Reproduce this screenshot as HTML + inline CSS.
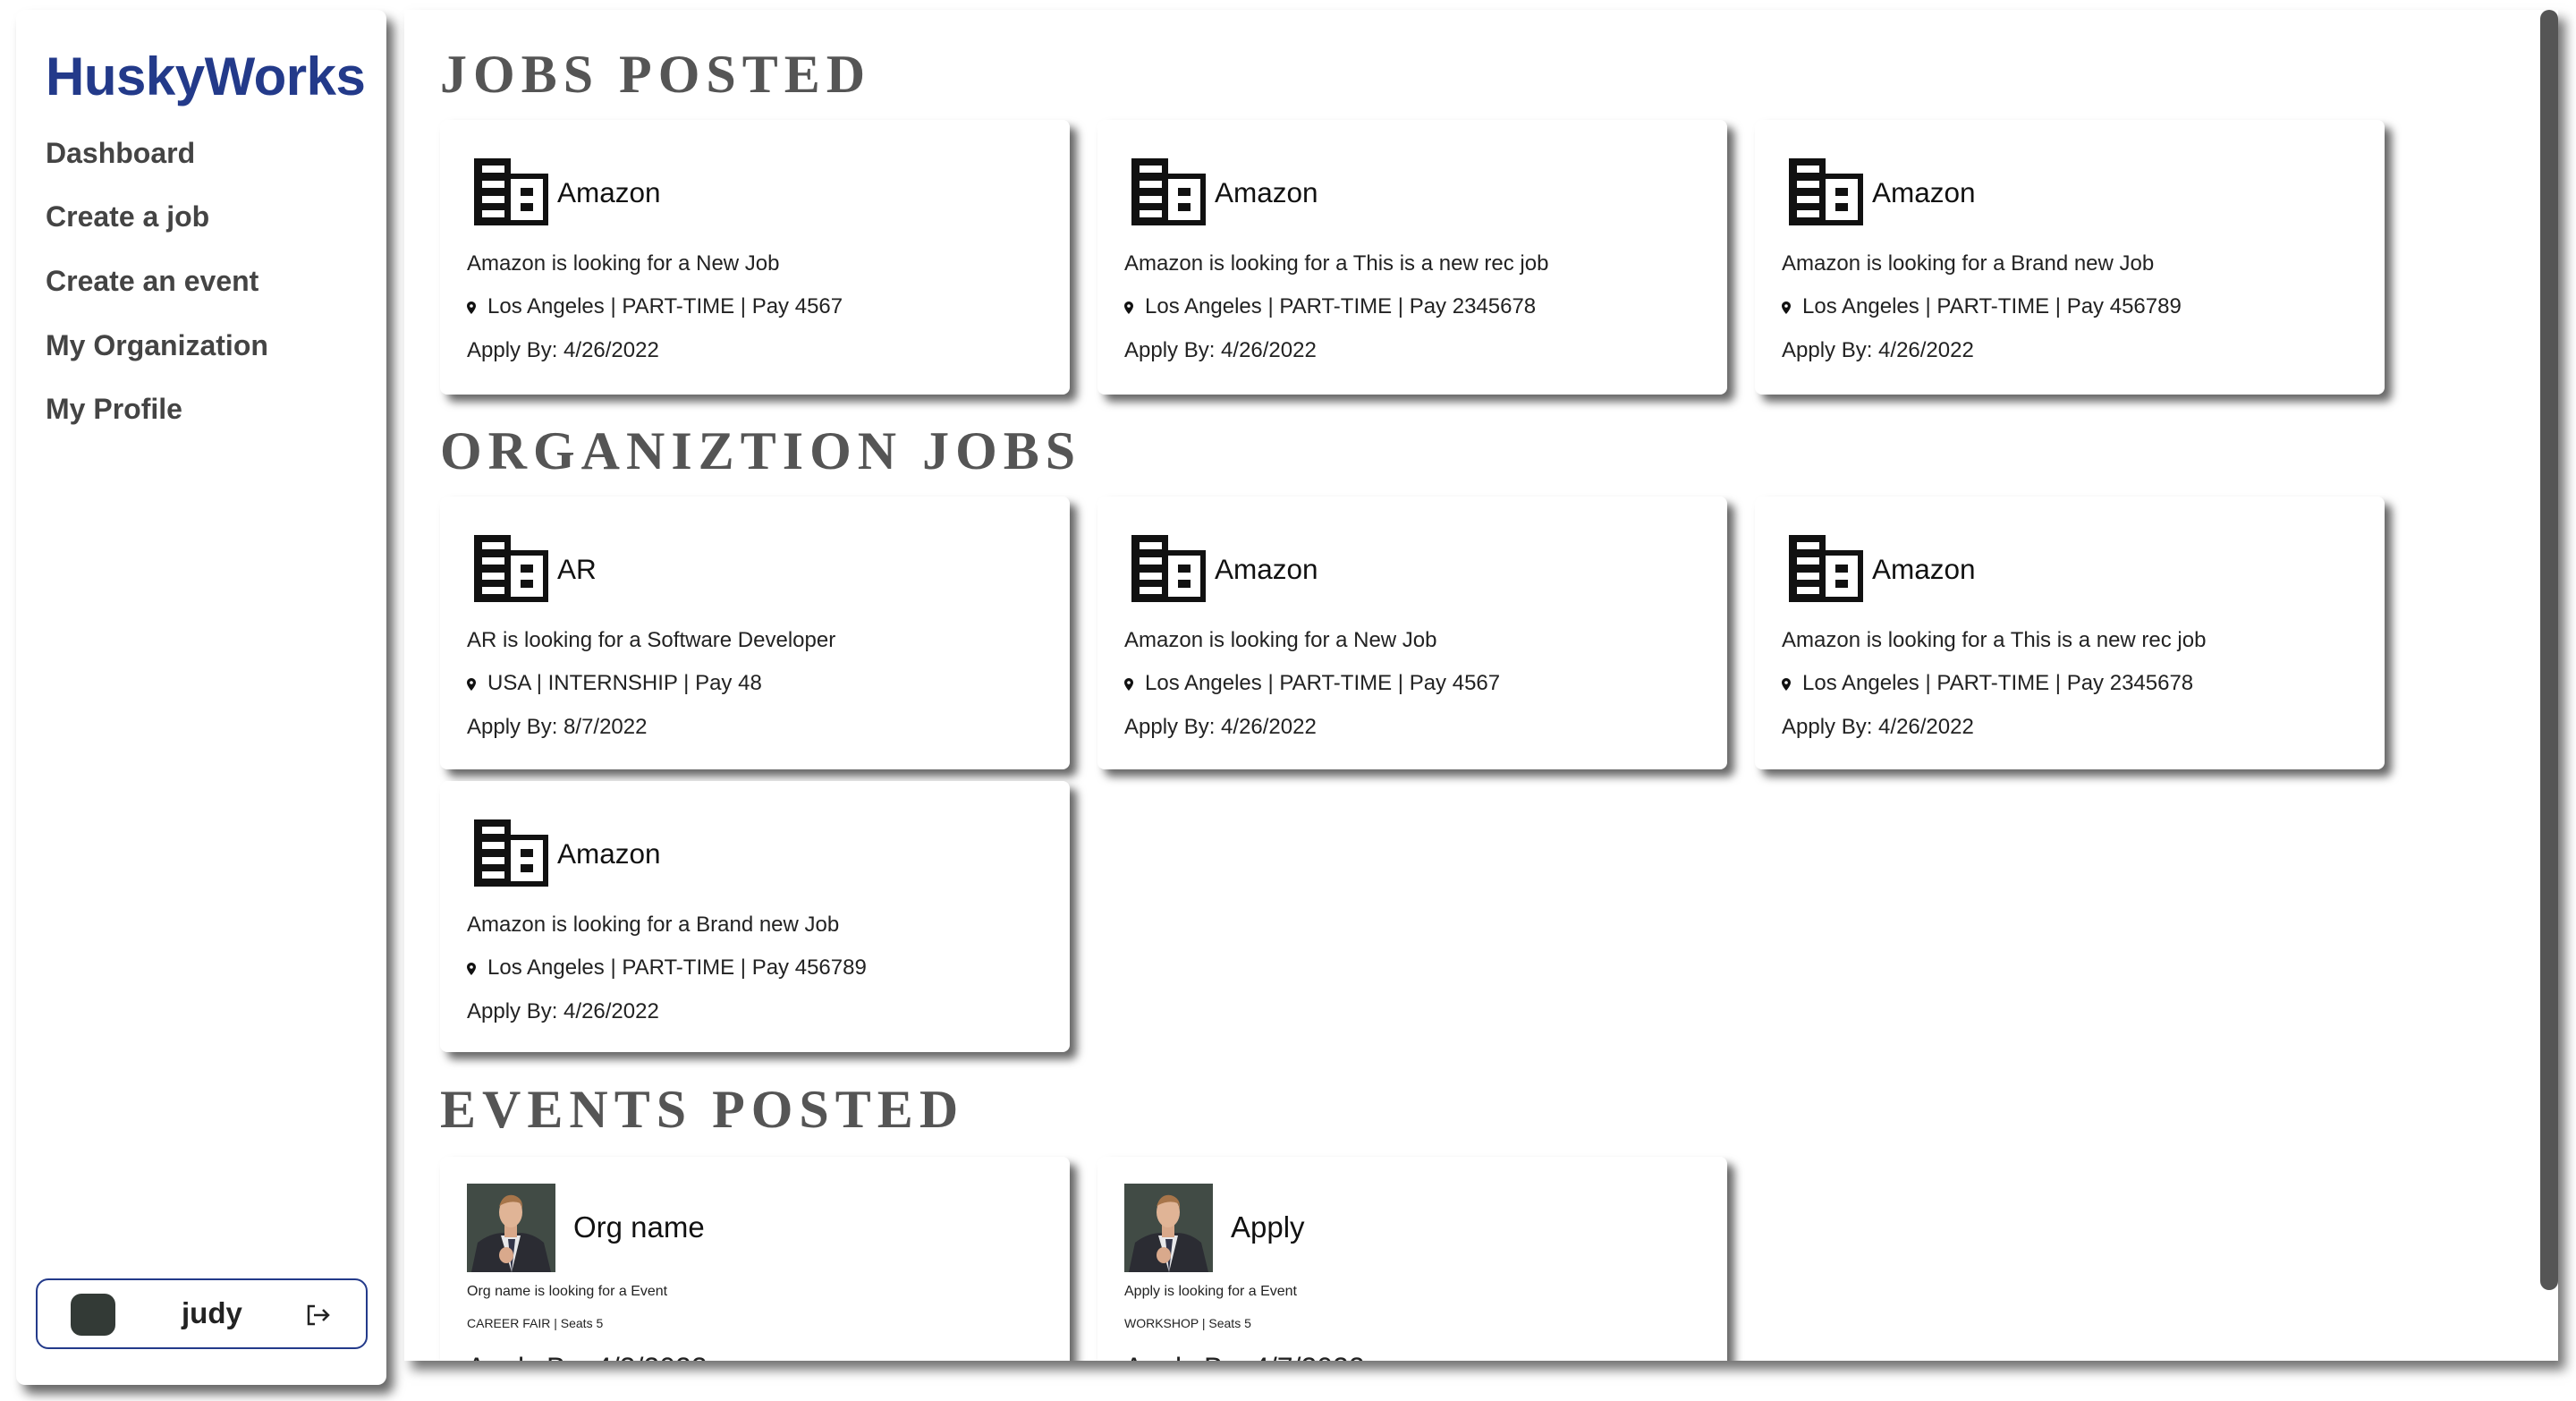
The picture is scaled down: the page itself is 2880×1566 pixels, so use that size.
<!DOCTYPE html>
<html><head><meta charset="utf-8"><style>
*{margin:0;padding:0;box-sizing:border-box}
html,body{width:2880px;height:1566px;overflow:hidden;background:#fff;font-family:"Liberation Sans",Arial,sans-serif;position:relative}
.side{position:absolute;left:18px;top:11px;width:414px;height:1537px;background:#fff;border-radius:10px;box-shadow:8px 10px 12px rgba(0,0,0,.6)}
.logo{position:absolute;left:33px;top:40px;font-size:60px;font-weight:bold;color:#233a8a;letter-spacing:-0.5px}
.nav{position:absolute;left:33px;font-size:32px;font-weight:bold;color:#444}
.user{position:absolute;left:22px;top:1418px;width:371px;height:79px;border:2px solid #233a8a;border-radius:14px}
.av{position:absolute;left:37px;top:15px;width:50px;height:47px;border-radius:12px;background:#333a36}
.uname{position:absolute;left:161px;top:18px;font-size:33px;font-weight:bold;color:#222}
.main{position:absolute;left:452px;top:11px;width:2408px;height:1510px;background:#fff;overflow:hidden;box-shadow:8px 10px 12px rgba(0,0,0,.55)}
.sb{position:absolute;right:0;top:0;width:20px;height:1431px;border-radius:10px;background:#555}
h2{position:absolute;left:40px;font-family:"Liberation Serif",serif;font-weight:bold;font-size:60px;line-height:60px;letter-spacing:7px;color:#555}
.card{position:absolute;width:704px;background:#fff;border-radius:8px;box-shadow:8px 8px 10px rgba(0,0,0,.6)}
.card svg.b{position:absolute;left:38px;top:43px}
.t{position:absolute;left:131px;top:63px;font-size:31.5px;color:#111}
.l{position:absolute;left:30px;font-size:24px;color:#222;white-space:nowrap}
.pin{display:inline-block;width:10px;height:14px;margin-right:13px;vertical-align:-1px}
.ph{position:absolute;left:30px;top:30px;width:99px;height:99px}
</style></head><body>
<div class="side">
<div class="logo">HuskyWorks</div>
<div class="nav" style="top:142px">Dashboard</div>
<div class="nav" style="top:213px">Create a job</div>
<div class="nav" style="top:285px">Create an event</div>
<div class="nav" style="top:357px">My Organization</div>
<div class="nav" style="top:428px">My Profile</div>
<div class="user"><div class="av"></div><div class="uname">judy</div>
<svg style="position:absolute;left:300px;top:26px" width="28" height="26" viewBox="0 0 28 26"><path d="M10 3H3v20h7" fill="none" stroke="#222" stroke-width="2.5"/><path d="M9 13h16M19 7l6 6-6 6" fill="none" stroke="#222" stroke-width="2.5"/></svg></div>
</div>
<svg width="0" height="0" style="position:absolute"><defs>
<symbol id="bld" viewBox="0 0 83 75"><rect x="0" y="0" width="41" height="75" fill="#111"/><rect x="9" y="8" width="25" height="8" fill="#fff"/><rect x="9" y="25" width="25" height="8" fill="#fff"/><rect x="9" y="42" width="25" height="8" fill="#fff"/><rect x="9" y="58" width="25" height="8" fill="#fff"/><rect x="41" y="17" width="42" height="58" fill="#111"/><rect x="41" y="23" width="36" height="46" fill="#fff"/><rect x="52" y="33" width="14" height="9" fill="#111"/><rect x="52" y="50" width="14" height="9" fill="#111"/></symbol>
<symbol id="pin" viewBox="0 0 10 14"><path d="M5 0C2.2 0 0 2.2 0 5c0 3.5 5 9 5 9s5-5.5 5-9C10 2.2 7.8 0 5 0zm0 6.8A1.8 1.8 0 1 1 5 3.2a1.8 1.8 0 0 1 0 3.6z" fill="#111"/></symbol>
<symbol id="man" viewBox="0 0 99 99"><rect width="99" height="99" fill="#414b45"/><path d="M5 99 L12 66 Q30 52 50 56 Q70 52 86 66 L94 99Z" fill="#2b2c33"/><path d="M38 58 L50 99 L60 58Z" fill="#e8e8ea"/><path d="M46 62 L50 99 L54 62Z" fill="#33364a"/><rect x="42" y="44" width="14" height="16" fill="#d8a88a"/><ellipse cx="49" cy="32" rx="13" ry="17" fill="#e0b496"/><path d="M36 26 Q40 11 52 13 Q63 16 62 28 L60 22 Q50 18 38 24Z" fill="#a7754a"/><ellipse cx="44" cy="80" rx="8" ry="9" fill="#d9a98c"/></symbol>
</defs></svg>
<div class="main">
<h2 style="top:42px">JOBS POSTED</h2>
<h2 style="top:463px">ORGANIZTION JOBS</h2>
<h2 style="top:1199px">EVENTS POSTED</h2>

<div class="card" style="left:40px;top:123px;height:307px"><svg class="b" width="83" height="75"><use href="#bld"/></svg><div class="t">Amazon</div><div class="l" style="top:147px">Amazon is looking for a New Job</div><div class="l" style="top:195px"><svg class="pin"><use href="#pin"/></svg>Los Angeles | PART-TIME | Pay 4567</div><div class="l" style="top:244px">Apply By: 4/26/2022</div></div>
<div class="card" style="left:775px;top:123px;height:307px"><svg class="b" width="83" height="75"><use href="#bld"/></svg><div class="t">Amazon</div><div class="l" style="top:147px">Amazon is looking for a This is a new rec job</div><div class="l" style="top:195px"><svg class="pin"><use href="#pin"/></svg>Los Angeles | PART-TIME | Pay 2345678</div><div class="l" style="top:244px">Apply By: 4/26/2022</div></div>
<div class="card" style="left:1510px;top:123px;height:307px"><svg class="b" width="83" height="75"><use href="#bld"/></svg><div class="t">Amazon</div><div class="l" style="top:147px">Amazon is looking for a Brand new Job</div><div class="l" style="top:195px"><svg class="pin"><use href="#pin"/></svg>Los Angeles | PART-TIME | Pay 456789</div><div class="l" style="top:244px">Apply By: 4/26/2022</div></div>

<div class="card" style="left:40px;top:544px;height:305px"><svg class="b" width="83" height="75"><use href="#bld"/></svg><div class="t">AR</div><div class="l" style="top:147px">AR is looking for a Software Developer</div><div class="l" style="top:195px"><svg class="pin"><use href="#pin"/></svg>USA | INTERNSHIP | Pay 48</div><div class="l" style="top:244px">Apply By: 8/7/2022</div></div>
<div class="card" style="left:775px;top:544px;height:305px"><svg class="b" width="83" height="75"><use href="#bld"/></svg><div class="t">Amazon</div><div class="l" style="top:147px">Amazon is looking for a New Job</div><div class="l" style="top:195px"><svg class="pin"><use href="#pin"/></svg>Los Angeles | PART-TIME | Pay 4567</div><div class="l" style="top:244px">Apply By: 4/26/2022</div></div>
<div class="card" style="left:1510px;top:544px;height:305px"><svg class="b" width="83" height="75"><use href="#bld"/></svg><div class="t">Amazon</div><div class="l" style="top:147px">Amazon is looking for a This is a new rec job</div><div class="l" style="top:195px"><svg class="pin"><use href="#pin"/></svg>Los Angeles | PART-TIME | Pay 2345678</div><div class="l" style="top:244px">Apply By: 4/26/2022</div></div>

<div class="card" style="left:40px;top:862px;height:303px"><svg class="b" width="83" height="75"><use href="#bld"/></svg><div class="t">Amazon</div><div class="l" style="top:147px">Amazon is looking for a Brand new Job</div><div class="l" style="top:195px"><svg class="pin"><use href="#pin"/></svg>Los Angeles | PART-TIME | Pay 456789</div><div class="l" style="top:244px">Apply By: 4/26/2022</div></div>

<div class="card" style="left:40px;top:1282px;height:320px"><svg class="ph"><use href="#man"/></svg><div class="t" style="left:149px;top:60px;font-size:33px">Org name</div><div class="l" style="top:142px;font-size:16px">Org name is looking for a Event</div><div class="l" style="top:178px;font-size:14px">CAREER FAIR | Seats 5</div><div class="l" style="top:218px;font-size:32px">Apply By: 4/3/2022</div></div>
<div class="card" style="left:775px;top:1282px;height:320px"><svg class="ph"><use href="#man"/></svg><div class="t" style="left:149px;top:60px;font-size:33px">Apply</div><div class="l" style="top:142px;font-size:16px">Apply is looking for a Event</div><div class="l" style="top:178px;font-size:14px">WORKSHOP | Seats 5</div><div class="l" style="top:218px;font-size:32px">Apply By: 4/7/2022</div></div>

<div class="sb"></div>
</div>
</body></html>
